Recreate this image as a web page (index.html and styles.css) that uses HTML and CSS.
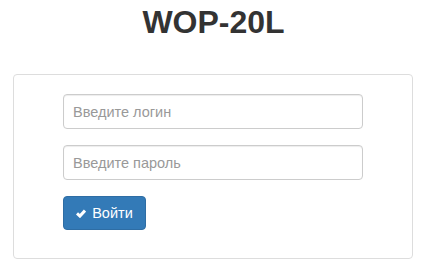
FILE: index.html
```html
<!DOCTYPE html>
<html lang="ru">
<head>
    <meta charset="UTF-8">
    <meta name="viewport" content="width=device-width, initial-scale=1.0">
    <title>WOP-20L</title>
    <link rel="stylesheet" href="styles.css">
</head>
<body>
    <h1 class="title">WOP-20L</h1>
    <div class="panel">
        <form class="login">
            <input class="field" type="text" placeholder="Введите логин">
            <input class="field" type="password" placeholder="Введите пароль">
            <button class="btn" type="submit">
                <svg class="icon" viewBox="0 0 10 9" width="10" height="9">
                    <polyline points="1,4.4 3.9,7.1 9,1.5" fill="none" stroke="#fff" stroke-width="3"/>
                </svg>
                Войти
            </button>
        </form>
    </div>
</body>
</html>
```

FILE: styles.css
```css
body{
    margin: 0;
    font-family: "Liberation Sans", Arial, Helvetica, sans-serif;
    color: #333;
    background-color: #fff;
}
.title{
    margin: 4px 0 34px;
    font-size: 32px;
    line-height: 36px;
    font-weight: bold;
    text-align: center;
    color: #333;
}
.panel{
    width: 398px;
    margin-left: 13px;
    border: 1px solid #ddd;
    border-radius: 4px;
    padding: 19px 0 28px;
}
.login{
    width: 300px;
    margin: 0 auto;
    display: flex;
    flex-direction: column;
    align-items: flex-start;
}
.field{
    box-sizing: border-box;
    width: 300px;
    height: 35px;
    margin: 0 0 16px;
    padding: 0 9px;
    border: 1px solid #ccc;
    border-radius: 4px;
    font-family: inherit;
    font-size: 14.5px;
    color: #555;
    box-shadow: inset 0 1px 1px rgba(0,0,0,.075);
}
.field::placeholder{
    color: #999;
}
.btn{
    box-sizing: border-box;
    height: 34px;
    width: 83px;
    display: flex;
    align-items: center;
    justify-content: center;
    gap: 6px;
    padding: 0 12px;
    background-color: #337ab7;
    border: 1px solid #2e6da4;
    border-radius: 4px;
    color: #fff;
    font-family: inherit;
    font-size: 14.5px;
    cursor: pointer;
}
.icon{
    display: block;
}
```
